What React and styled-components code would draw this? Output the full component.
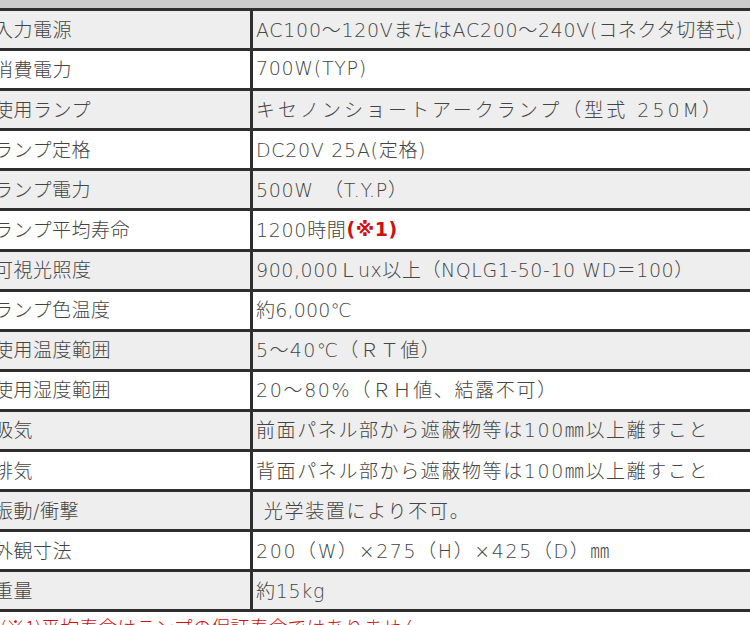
import React from "react";
import styled, { createGlobalStyle } from "styled-components";

const GlobalStyle = createGlobalStyle`
  html, body {
    margin: 0;
    padding: 0;
    background: #fff;
    overflow: hidden;
  }
  body {
    font-family: "Noto Sans CJK JP", "Noto Sans", sans-serif;
    color: #444;
  }
`;

const Page = styled.div`
  width: 800px;
  margin-left: -12px;
`;

const TopBand = styled.div`
  height: 8px;
  background: #cccccc;
`;

const Table = styled.div`
  display: flex;
  flex-direction: column;
  border-top: 3px solid #2e2e2e;
`;

const Row = styled.div`
  display: flex;
  height: 37.1px;
  border-bottom: 3px solid #2e2e2e;
  background: ${(p) => (p.$shaded ? "#eeeeee" : "#ffffff")};
`;

const Label = styled.div`
  width: 265px;
  flex-shrink: 0;
  border-right: 3px solid #2e2e2e;
  display: flex;
  align-items: center;
  padding: 0 0 3px 6px;
  box-sizing: border-box;
  font-family: "DejaVu Sans", "Noto Sans CJK JP", sans-serif;
  font-size: 19px;
  font-weight: 300;
  letter-spacing: 0.5px;
  white-space: nowrap;
`;

const Value = styled.div`
  flex: 1;
  display: flex;
  align-items: center;
  padding: 0 0 3px 3px;
  box-sizing: border-box;
  font-family: "DejaVu Sans", "Noto Sans CJK JP", sans-serif;
  font-size: 19px;
  font-weight: 300;
  letter-spacing: ${(p) => p.$spacing || 0.7}px;
  white-space: pre;
`;

const Note = styled.span`
  color: #d01010;
  font-weight: 700;
  letter-spacing: 0.5px;
`;

const Footnote = styled.div`
  margin-top: 1px;
  padding-left: 12px;
  color: #d01010;
  font-size: 19px;
  font-weight: 300;
  white-space: nowrap;
`;

const rows = [
  { label: "入力電源", value: "AC100～120VまたはAC200～240V(コネクタ切替式)" },
  { label: "消費電力", value: "700W(TYP)" },
  { label: "使用ランプ", value: "キセノンショートアークランプ（型式 250M）", spacing: 3 },
  { label: "ランプ定格", value: "DC20V 25A(定格)" },
  { label: "ランプ電力", value: "500W　（T.Y.P）" },
  { label: "ランプ平均寿命", value: "1200時間", note: true },
  { label: "可視光照度", value: "900,000Ｌux以上（NQLG1-50-10 WD＝100）", spacing: 0.55 },
  { label: "ランプ色温度", value: "約6,000℃", spacing: 0.2 },
  { label: "使用温度範囲", value: "5～40℃（ＲＴ値）", spacing: 1.35 },
  { label: "使用湿度範囲", value: "20～80%（ＲＨ値、結露不可）", spacing: 1.65 },
  { label: "吸気", value: "前面パネル部から遮蔽物等は100㎜以上離すこと", spacing: 1.6 },
  { label: "排気", value: "背面パネル部から遮蔽物等は100㎜以上離すこと", spacing: 1.6 },
  { label: "振動/衝撃", value: " 光学装置により不可。", spacing: 1.7 },
  { label: "外観寸法", value: "200（W）×275（H）×425（D）㎜", spacing: 1.6 },
  { label: "重量", value: "約15kg" },
];

export default function App() {
  return (
    <>
      <GlobalStyle />
      <Page>
        <TopBand />
        <Table>
          {rows.map((r, i) => (
            <Row key={r.label} $shaded={i % 2 === 0}>
              <Label>{r.label}</Label>
              <Value $spacing={r.spacing}>
                {r.value}
                {r.note && <Note>(※1)</Note>}
              </Value>
            </Row>
          ))}
        </Table>
        <Footnote>(※1)平均寿命はランプの保証寿命ではありません。</Footnote>
      </Page>
    </>
  );
}
